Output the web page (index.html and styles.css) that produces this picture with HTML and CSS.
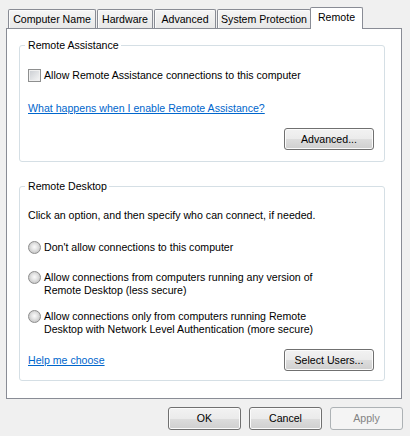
FILE: index.html
```html
<!DOCTYPE html>
<html>
<head>
<meta charset="utf-8">
<title>System Properties - Remote</title>
<link rel="stylesheet" href="styles.css">
</head>
<body>
<div class="dialog">
  <div class="tabs">
    <div class="tab tab-cn">Computer Name</div>
    <div class="tab tab-hw">Hardware</div>
    <div class="tab tab-adv">Advanced</div>
    <div class="tab tab-sp">System Protection</div>
    <div class="tab tab-remote selected">Remote</div>
  </div>
  <div class="panel">
    <div class="group group-ra">
      <div class="legend">Remote Assistance</div>
      <div class="check-row">
        <span class="check"></span>
        <span class="label">Allow Remote Assistance connections to this computer</span>
      </div>
      <div class="link-row"><span class="link">What happens when I enable Remote Assistance?</span></div>
      <div class="btn-row"><span class="btn btn-group">Advanced...</span></div>
    </div>
    <div class="group group-rd">
      <div class="legend">Remote Desktop</div>
      <div class="intro">Click an option, and then specify who can connect, if needed.</div>
      <div class="radio-row r1">
        <span class="radio"></span>
        <span class="label">Don't allow connections to this computer</span>
      </div>
      <div class="radio-row r2">
        <span class="radio"></span>
        <span class="label">Allow connections from computers running any version of<br>Remote Desktop (less secure)</span>
      </div>
      <div class="radio-row r3">
        <span class="radio"></span>
        <span class="label">Allow connections only from computers running Remote<br>Desktop with Network Level Authentication (more secure)</span>
      </div>
      <div class="footer-row">
        <span class="link">Help me choose</span>
        <span class="btn btn-group">Select Users...</span>
      </div>
    </div>
  </div>
  <div class="actions">
    <span class="btn btn-dlg">OK</span>
    <span class="btn btn-dlg">Cancel</span>
    <span class="btn btn-dlg disabled">Apply</span>
  </div>
</div>
</body>
</html>
```
FILE: styles.css
```css
html, body {
  margin: 0;
  padding: 0;
}
body {
  width: 410px;
  height: 436px;
  overflow: hidden;
  background: #f0f0f0;
  color: #000;
  font-family: "Liberation Sans", Arial, sans-serif;
  font-size: 10.6px;
  line-height: 13px;
}
.dialog {
  padding-top: 7px;
}
.tabs {
  display: flex;
  align-items: flex-end;
  height: 22px;
  padding-left: 8px;
  margin-bottom: -1px;
}
.tab {
  box-sizing: border-box;
  height: 19px;
  margin-bottom: 1px;
  margin-right: 1px;
  padding-top: 3px;
  border: 1px solid #898c95;
  border-bottom: none;
  border-radius: 2px 2px 0 0;
  background: linear-gradient(#f5f5f5, #e8e8e8);
  box-shadow: inset 1px 1px 0 #fbfbfb;
  text-align: center;
  white-space: nowrap;
}
.tab-cn { width: 88px; }
.tab-hw { width: 56px; }
.tab-adv { width: 62px; }
.tab-sp { width: 94px; margin-right: 0; }
.tab-remote { width: 53px; }
.tab.selected {
  position: relative;
  z-index: 1;
  height: 22px;
  margin-bottom: 0;
  margin-left: -1px;
  background: #fff;
  box-shadow: none;
}
.panel {
  box-sizing: border-box;
  width: 396px;
  height: 371px;
  margin-left: 6px;
  padding: 16px 0 0 12px;
  border: 1px solid #898c95;
  background: #fff;
}
.group {
  box-sizing: border-box;
  width: 366px;
  border: 1px solid #d5dfe5;
  border-radius: 3px;
  padding: 0 10px 11px 8px;
}
.group-rd {
  margin-top: 24px;
  padding-bottom: 9px;
}
.legend {
  width: fit-content;
  margin: -7px 0 0 -3px;
  padding: 0 2px 0 3px;
  background: #fff;
}
.check-row, .radio-row {
  display: flex;
  align-items: flex-start;
  gap: 3px;
}
.check-row { margin-top: 17px; }
.check {
  box-sizing: border-box;
  flex: none;
  width: 13px;
  height: 13px;
  border: 1px solid #8e8f8f;
  background: linear-gradient(135deg, #c9ccd1, #f7f7f7);
  box-shadow: inset 0 0 0 1px #f0f0f0;
}
.radio {
  box-sizing: border-box;
  flex: none;
  width: 13px;
  height: 13px;
  border: 1px solid #8d8d8d;
  border-radius: 50%;
  background: radial-gradient(circle at 50% 45%, #fbfbfb 0, #e6e6e6 35%, #c8c8c8 75%, #dcdcdc 100%);
}
.link-row { margin-top: 20px; }
.link {
  color: #0066cc;
  text-decoration: underline;
}
.btn-row {
  display: flex;
  justify-content: flex-end;
  margin-top: 13px;
}
.btn {
  box-sizing: border-box;
  display: flex;
  align-items: center;
  justify-content: center;
  border: 1px solid #707070;
  border-radius: 3px;
  background: linear-gradient(#f2f2f2 0%, #ebebeb 50%, #dddddd 51%, #cfcfcf 100%);
  box-shadow: inset 0 0 0 1px #fbfbfb;
  white-space: nowrap;
}
.btn-group {
  width: 90px;
  height: 22px;
}
.intro { margin-top: 16px; }
.r1 { margin-top: 19px; }
.r2 { margin-top: 17px; }
.r3 { margin-top: 13px; }
.footer-row {
  display: flex;
  align-items: center;
  justify-content: space-between;
  margin-top: 13px;
}
.actions {
  display: flex;
  justify-content: flex-end;
  gap: 8px;
  margin-top: 8px;
  padding-right: 7px;
}
.btn-dlg {
  width: 73px;
  height: 23px;
}
.btn.disabled {
  border-color: #adb2b5;
  background: #f4f4f4;
  box-shadow: none;
  color: #838383;
}
```
